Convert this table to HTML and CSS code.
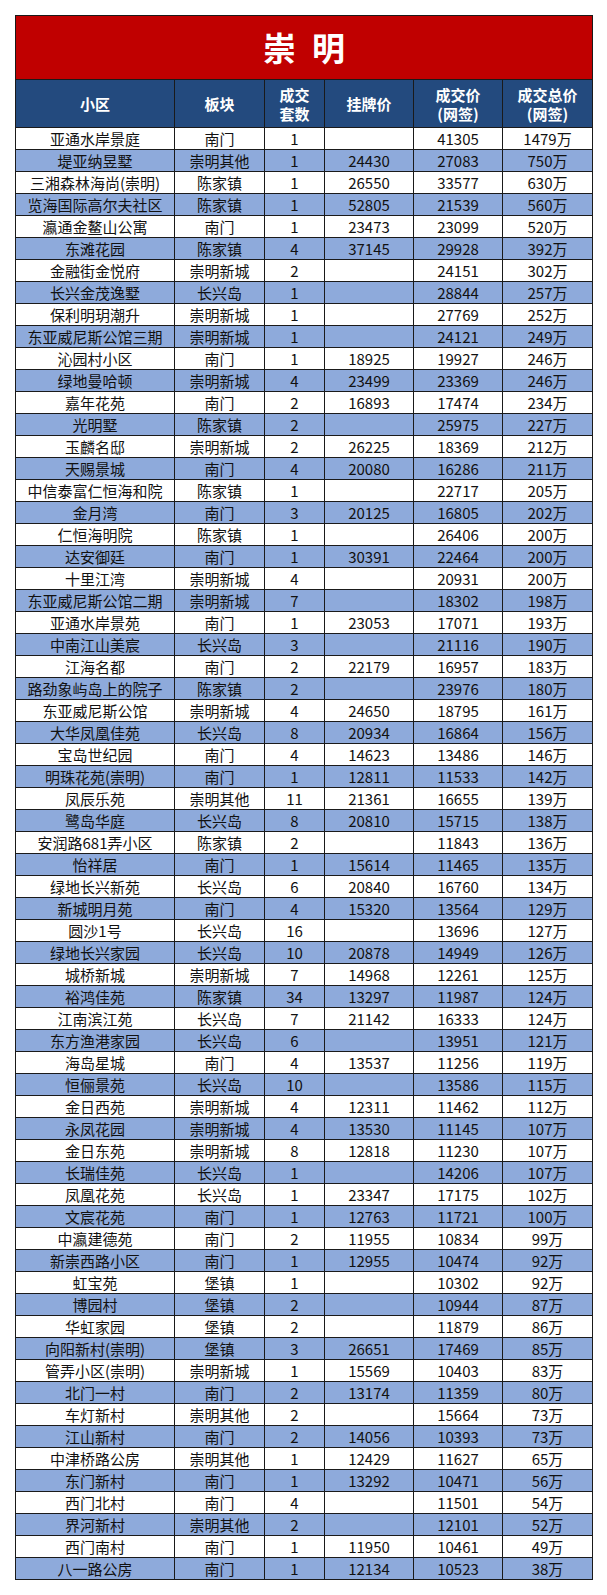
FILE: index.html
```html
<!DOCTYPE html>
<html lang="zh">
<head>
<meta charset="utf-8">
<title>崇明</title>
<link rel="stylesheet" href="styles.css">
</head>
<body>
<div class="sheet" role="table">
  <div class="title">崇明</div>
  <div class="row head" role="row"><div>小区</div><div>板块</div><div>成交<br>套数</div><div>挂牌价</div><div>成交价<br>(网签)</div><div>成交总价<br>(网签)</div></div>
  <div class="row" role="row"><div>亚通水岸景庭</div><div>南门</div><div>1</div><div></div><div>41305</div><div>1479万</div></div>
  <div class="row" role="row"><div>堤亚纳昱墅</div><div>崇明其他</div><div>1</div><div>24430</div><div>27083</div><div>750万</div></div>
  <div class="row" role="row"><div>三湘森林海尚(崇明)</div><div>陈家镇</div><div>1</div><div>26550</div><div>33577</div><div>630万</div></div>
  <div class="row" role="row"><div>览海国际高尔夫社区</div><div>陈家镇</div><div>1</div><div>52805</div><div>21539</div><div>560万</div></div>
  <div class="row" role="row"><div>瀛通金鳌山公寓</div><div>南门</div><div>1</div><div>23473</div><div>23099</div><div>520万</div></div>
  <div class="row" role="row"><div>东滩花园</div><div>陈家镇</div><div>4</div><div>37145</div><div>29928</div><div>392万</div></div>
  <div class="row" role="row"><div>金融街金悦府</div><div>崇明新城</div><div>2</div><div></div><div>24151</div><div>302万</div></div>
  <div class="row" role="row"><div>长兴金茂逸墅</div><div>长兴岛</div><div>1</div><div></div><div>28844</div><div>257万</div></div>
  <div class="row" role="row"><div>保利明玥潮升</div><div>崇明新城</div><div>1</div><div></div><div>27769</div><div>252万</div></div>
  <div class="row" role="row"><div>东亚威尼斯公馆三期</div><div>崇明新城</div><div>1</div><div></div><div>24121</div><div>249万</div></div>
  <div class="row" role="row"><div>沁园村小区</div><div>南门</div><div>1</div><div>18925</div><div>19927</div><div>246万</div></div>
  <div class="row" role="row"><div>绿地曼哈顿</div><div>崇明新城</div><div>4</div><div>23499</div><div>23369</div><div>246万</div></div>
  <div class="row" role="row"><div>嘉年花苑</div><div>南门</div><div>2</div><div>16893</div><div>17474</div><div>234万</div></div>
  <div class="row" role="row"><div>光明墅</div><div>陈家镇</div><div>2</div><div></div><div>25975</div><div>227万</div></div>
  <div class="row" role="row"><div>玉麟名邸</div><div>崇明新城</div><div>2</div><div>26225</div><div>18369</div><div>212万</div></div>
  <div class="row" role="row"><div>天赐景城</div><div>南门</div><div>4</div><div>20080</div><div>16286</div><div>211万</div></div>
  <div class="row" role="row"><div>中信泰富仁恒海和院</div><div>陈家镇</div><div>1</div><div></div><div>22717</div><div>205万</div></div>
  <div class="row" role="row"><div>金月湾</div><div>南门</div><div>3</div><div>20125</div><div>16805</div><div>202万</div></div>
  <div class="row" role="row"><div>仁恒海明院</div><div>陈家镇</div><div>1</div><div></div><div>26406</div><div>200万</div></div>
  <div class="row" role="row"><div>达安御廷</div><div>南门</div><div>1</div><div>30391</div><div>22464</div><div>200万</div></div>
  <div class="row" role="row"><div>十里江湾</div><div>崇明新城</div><div>4</div><div></div><div>20931</div><div>200万</div></div>
  <div class="row" role="row"><div>东亚威尼斯公馆二期</div><div>崇明新城</div><div>7</div><div></div><div>18302</div><div>198万</div></div>
  <div class="row" role="row"><div>亚通水岸景苑</div><div>南门</div><div>1</div><div>23053</div><div>17071</div><div>193万</div></div>
  <div class="row" role="row"><div>中南江山美宸</div><div>长兴岛</div><div>3</div><div></div><div>21116</div><div>190万</div></div>
  <div class="row" role="row"><div>江海名都</div><div>南门</div><div>2</div><div>22179</div><div>16957</div><div>183万</div></div>
  <div class="row" role="row"><div>路劲象屿岛上的院子</div><div>陈家镇</div><div>2</div><div></div><div>23976</div><div>180万</div></div>
  <div class="row" role="row"><div>东亚威尼斯公馆</div><div>崇明新城</div><div>4</div><div>24650</div><div>18795</div><div>161万</div></div>
  <div class="row" role="row"><div>大华凤凰佳苑</div><div>长兴岛</div><div>8</div><div>20934</div><div>16864</div><div>156万</div></div>
  <div class="row" role="row"><div>宝岛世纪园</div><div>南门</div><div>4</div><div>14623</div><div>13486</div><div>146万</div></div>
  <div class="row" role="row"><div>明珠花苑(崇明)</div><div>南门</div><div>1</div><div>12811</div><div>11533</div><div>142万</div></div>
  <div class="row" role="row"><div>凤辰乐苑</div><div>崇明其他</div><div>11</div><div>21361</div><div>16655</div><div>139万</div></div>
  <div class="row" role="row"><div>鹭岛华庭</div><div>长兴岛</div><div>8</div><div>20810</div><div>15715</div><div>138万</div></div>
  <div class="row" role="row"><div>安润路681弄小区</div><div>陈家镇</div><div>2</div><div></div><div>11843</div><div>136万</div></div>
  <div class="row" role="row"><div>怡祥居</div><div>南门</div><div>1</div><div>15614</div><div>11465</div><div>135万</div></div>
  <div class="row" role="row"><div>绿地长兴新苑</div><div>长兴岛</div><div>6</div><div>20840</div><div>16760</div><div>134万</div></div>
  <div class="row" role="row"><div>新城明月苑</div><div>南门</div><div>4</div><div>15320</div><div>13564</div><div>129万</div></div>
  <div class="row" role="row"><div>圆沙1号</div><div>长兴岛</div><div>16</div><div></div><div>13696</div><div>127万</div></div>
  <div class="row" role="row"><div>绿地长兴家园</div><div>长兴岛</div><div>10</div><div>20878</div><div>14949</div><div>126万</div></div>
  <div class="row" role="row"><div>城桥新城</div><div>崇明新城</div><div>7</div><div>14968</div><div>12261</div><div>125万</div></div>
  <div class="row" role="row"><div>裕鸿佳苑</div><div>陈家镇</div><div>34</div><div>13297</div><div>11987</div><div>124万</div></div>
  <div class="row" role="row"><div>江南滨江苑</div><div>长兴岛</div><div>7</div><div>21142</div><div>16333</div><div>124万</div></div>
  <div class="row" role="row"><div>东方渔港家园</div><div>长兴岛</div><div>6</div><div></div><div>13951</div><div>121万</div></div>
  <div class="row" role="row"><div>海岛星城</div><div>南门</div><div>4</div><div>13537</div><div>11256</div><div>119万</div></div>
  <div class="row" role="row"><div>恒俪景苑</div><div>长兴岛</div><div>10</div><div></div><div>13586</div><div>115万</div></div>
  <div class="row" role="row"><div>金日西苑</div><div>崇明新城</div><div>4</div><div>12311</div><div>11462</div><div>112万</div></div>
  <div class="row" role="row"><div>永凤花园</div><div>崇明新城</div><div>4</div><div>13530</div><div>11145</div><div>107万</div></div>
  <div class="row" role="row"><div>金日东苑</div><div>崇明新城</div><div>8</div><div>12818</div><div>11230</div><div>107万</div></div>
  <div class="row" role="row"><div>长瑞佳苑</div><div>长兴岛</div><div>1</div><div></div><div>14206</div><div>107万</div></div>
  <div class="row" role="row"><div>凤凰花苑</div><div>长兴岛</div><div>1</div><div>23347</div><div>17175</div><div>102万</div></div>
  <div class="row" role="row"><div>文宸花苑</div><div>南门</div><div>1</div><div>12763</div><div>11721</div><div>100万</div></div>
  <div class="row" role="row"><div>中瀛建德苑</div><div>南门</div><div>2</div><div>11955</div><div>10834</div><div>99万</div></div>
  <div class="row" role="row"><div>新崇西路小区</div><div>南门</div><div>1</div><div>12955</div><div>10474</div><div>92万</div></div>
  <div class="row" role="row"><div>虹宝苑</div><div>堡镇</div><div>1</div><div></div><div>10302</div><div>92万</div></div>
  <div class="row" role="row"><div>博园村</div><div>堡镇</div><div>2</div><div></div><div>10944</div><div>87万</div></div>
  <div class="row" role="row"><div>华虹家园</div><div>堡镇</div><div>2</div><div></div><div>11879</div><div>86万</div></div>
  <div class="row" role="row"><div>向阳新村(崇明)</div><div>堡镇</div><div>3</div><div>26651</div><div>17469</div><div>85万</div></div>
  <div class="row" role="row"><div>管弄小区(崇明)</div><div>崇明新城</div><div>1</div><div>15569</div><div>10403</div><div>83万</div></div>
  <div class="row" role="row"><div>北门一村</div><div>南门</div><div>2</div><div>13174</div><div>11359</div><div>80万</div></div>
  <div class="row" role="row"><div>车灯新村</div><div>崇明其他</div><div>2</div><div></div><div>15664</div><div>73万</div></div>
  <div class="row" role="row"><div>江山新村</div><div>南门</div><div>2</div><div>14056</div><div>10393</div><div>73万</div></div>
  <div class="row" role="row"><div>中津桥路公房</div><div>崇明其他</div><div>1</div><div>12429</div><div>11627</div><div>65万</div></div>
  <div class="row" role="row"><div>东门新村</div><div>南门</div><div>1</div><div>13292</div><div>10471</div><div>56万</div></div>
  <div class="row" role="row"><div>西门北村</div><div>南门</div><div>4</div><div></div><div>11501</div><div>54万</div></div>
  <div class="row" role="row"><div>界河新村</div><div>崇明其他</div><div>2</div><div></div><div>12101</div><div>52万</div></div>
  <div class="row" role="row"><div>西门南村</div><div>南门</div><div>1</div><div>11950</div><div>10461</div><div>49万</div></div>
  <div class="row" role="row"><div>八一路公房</div><div>南门</div><div>1</div><div>12134</div><div>10523</div><div>38万</div></div>
</div>
</body>
</html>
```

FILE: styles.css
```css
html, body {
  margin: 0;
  padding: 0;
  background: #ffffff;
}

body {
  font-family: "Noto Sans CJK SC", "Noto Sans", sans-serif;
  color: #111111;
  padding: 15px 0 0 15px;
}

.sheet {
  box-sizing: border-box;
  width: 578px;
  border-left: 1px solid #1a1a1a;
  border-top: 1px solid #1a1a1a;
}

.title {
  box-sizing: border-box;
  height: 64px;
  border-right: 1px solid #1a1a1a;
  border-bottom: 1px solid #1a1a1a;
  background: #c00000;
  color: #ffffff;
  font-size: 33px;
  font-weight: 700;
  line-height: 62px;
  text-align: center;
  letter-spacing: 16px;
  text-indent: 16px;
}

.row {
  display: grid;
  grid-template-columns: 159px 90px 60px 89px 89px 90px;
  height: 22px;
  font-size: 15px;
}

.row > div {
  box-sizing: border-box;
  display: flex;
  align-items: center;
  justify-content: center;
  text-align: center;
  white-space: nowrap;
  overflow: hidden;
  border-right: 1px solid #1a1a1a;
  border-bottom: 1px solid #1a1a1a;
  line-height: 20px;
}

.row:nth-child(even) > div {
  background: #8eaadb;
}

.row.head {
  height: 48px;
}

.row.head > div {
  background: #234a7e;
  color: #ffffff;
  font-weight: 700;
  line-height: 19px;
}
```
